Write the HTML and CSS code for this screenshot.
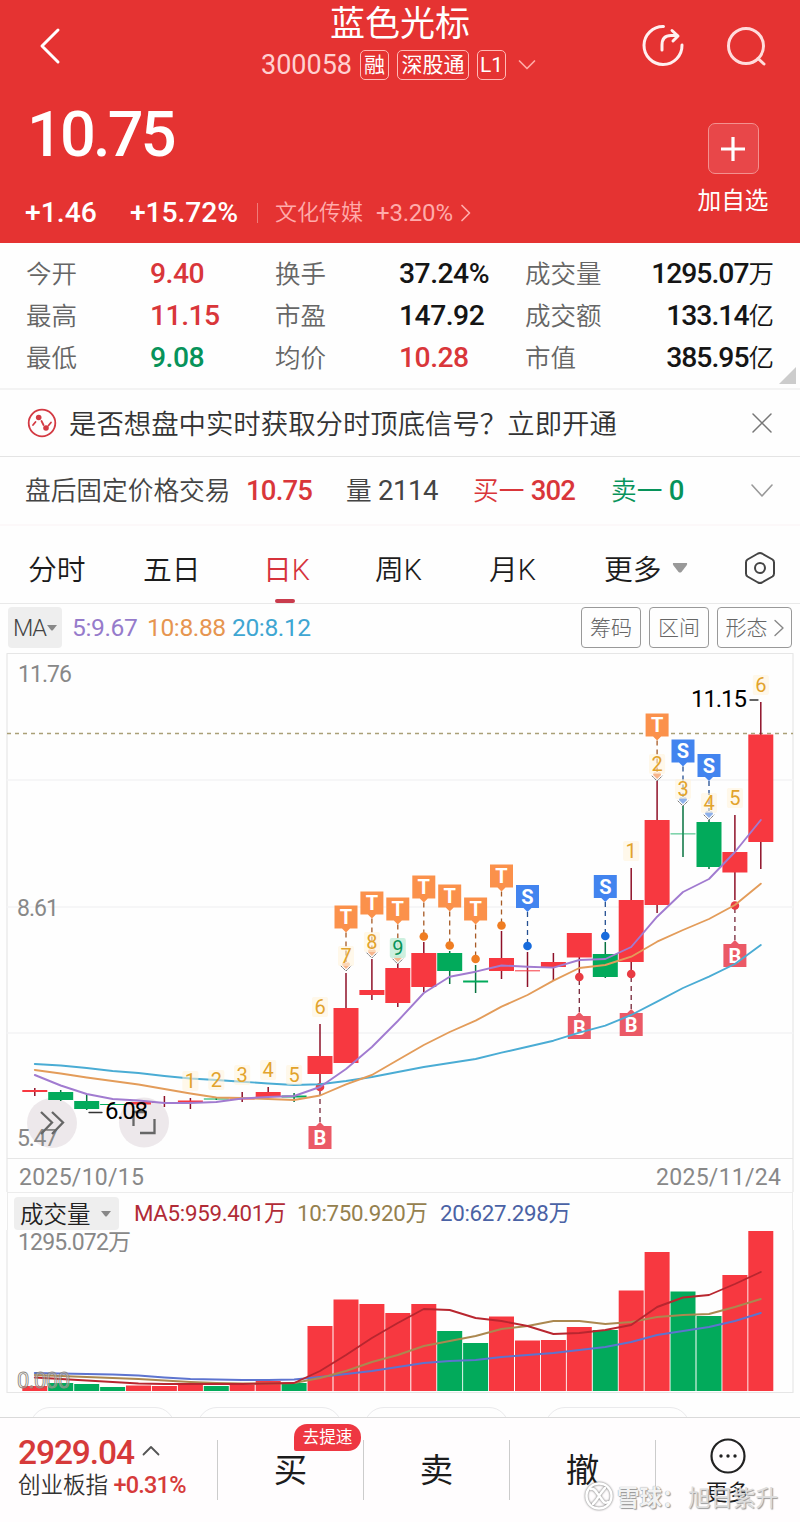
FILE: index.html
```html
<!DOCTYPE html>
<html lang="zh-CN">
<head>
    <meta charset="UTF-8">
    <meta name="viewport" content="width=device-width, initial-scale=1.0">
    <title>蓝色光标 300058</title>
    <link rel="stylesheet" href="styles.css">
</head>
<body>
    <div class="app">
        <!-- Header -->
        <header class="header">
            <div class="nav">
                <svg class="back" width="30" height="44" viewBox="0 0 30 44"><path d="M23 8 L7 24 L23 40"/></svg>
                <div class="stock">
                    <h1>蓝色光标</h1>
                    <div class="stock-code">
                        <span class="code">300058</span>
                        <span class="tag">融</span>
                        <span class="tag tag-wide">深股通</span>
                        <span class="tag">L1</span>
                        <svg class="code-arrow" width="18" height="12" viewBox="0 0 18 12"><path d="M1.5 2 L9 9.5 L16.5 2"/></svg>
                    </div>
                </div>
                <div class="nav-icons">
                    <svg width="44" height="44" viewBox="0 0 44 44">
                        <path d="M22.5 2.5 A19 19 0 1 0 41 21"/>
                        <path d="M21 26 V21 Q21 11.500 30 11.500 H36 M31 6.500 L37 12 L32 17"/>
                    </svg>
                    <svg class="search" width="42" height="42" viewBox="0 0 42 42"><circle cx="20" cy="20" r="17.500"/><path d="M32 32.500 L38 38"/></svg>
                </div>
            </div>
            <div class="quote">
                <div class="quote-left">
                    <div class="price">10.75</div>
                    <div class="change">
                        <span class="diff">+1.46</span>
                        <span class="percent">+15.72%</span>
                        <span class="sector">文化传媒</span>
                        <span class="sector-percent">+3.20%</span>
                        <svg width="12" height="18" viewBox="0 0 12 18"><path d="M2 1.500 L9.500 9 L2 16.500"/></svg>
                    </div>
                </div>
                <div class="add">
                    <div class="add-button"><svg width="26" height="26" viewBox="0 0 26 26"><path d="M13 1 V25 M1 13 H25"/></svg></div>
                    <span>加自选</span>
                </div>
            </div>
        </header>

        <!-- Stats -->
        <section class="stats">
            <span>今开</span><b class="red">9.40</b><span>换手</span><b>37.24%</b><span>成交量</span><b class="last">1295.07<i>万</i></b>
            <span>最高</span><b class="red">11.15</b><span>市盈</span><b>147.92</b><span>成交额</span><b class="last">133.14<i>亿</i></b>
            <span>最低</span><b class="green">9.08</b><span>均价</span><b class="red">10.28</b><span>市值</span><b class="last">385.95<i>亿</i></b>
            <div class="corner"></div>
        </section>

        <!-- Notice -->
        <section class="notice">
            <svg width="30" height="30" viewBox="0 0 30 30">
                <circle class="ring" cx="15" cy="15" r="13.300"/>
                <path d="M6 17 L8.500 14 M14.500 13 L16.500 17 M21.500 17.500 L24 14.500"/>
                <circle cx="11.700" cy="9.500" r="2.800"/><circle cx="19" cy="20" r="2.800"/>
            </svg>
            <p>是否想盘中实时获取分时顶底信号？立即开通</p>
            <svg class="close" width="20" height="20" viewBox="0 0 20 20"><path d="M1 1 L19 19 M19 1 L1 19"/></svg>
        </section>

        <!-- After-hours trading -->
        <section class="after">
            <span class="after-name">盘后固定价格交易</span>
            <b class="red after-price">10.75</b>
            <span class="after-volume">量 <b>2114</b></span>
            <span class="after-buy red">买一 <b>302</b></span>
            <span class="after-sell green">卖一 <b>0</b></span>
            <svg width="24" height="14" viewBox="0 0 24 14"><path d="M2 1 L12 12 L22 1"/></svg>
        </section>

        <!-- Period tabs -->
        <nav class="tabs">
            <span>分时</span>
            <span>五日</span>
            <span class="active">日K</span>
            <span>周K</span>
            <span>月K</span>
            <span>更多</span>
            <svg class="tri" width="16" height="10" viewBox="0 0 16 10"><path d="M1 0 H15 Q15.500 1 14.500 2.500 L9.500 9 Q8 10 6.500 9 L1.500 2.500 Q.5 1 1 0Z"/></svg>
            <svg class="hex" width="32" height="34" viewBox="0 0 32 34"><path d="M14 2.500 Q16 1.500 18 2.500 L28.500 8.500 Q30 9.500 30 11.500 V22.500 Q30 24.500 28.500 25.500 L18 31.500 Q16 32.500 14 31.500 L3.500 25.500 Q2 24.500 2 22.500 V11.500 Q2 9.500 3.500 8.500Z"/><circle cx="16" cy="17" r="5"/></svg>
        </nav>

        <!-- Indicators -->
        <div class="indicators">
            <div class="select">MA<svg width="10" height="6" viewBox="0 0 10 6"><path d="M0 0 H10 L6 5 Q5 6 4 5Z"/></svg></div>
            <span class="ma5">5:9.67</span>
            <span class="ma10">10:8.88</span>
            <span class="ma20">20:8.12</span>
            <div class="tools">
                <button>筹码</button>
                <button>区间</button>
                <button class="shape">形态<svg width="10" height="18" viewBox="0 0 10 18"><path d="M1 1.500 L9 9 L1 16.500"/></svg></button>
            </div>
        </div>

        <svg class="kline" id="kline" width="800" height="540" viewBox="0 652 800 540"></svg>

        <!-- Volume -->
        <div class="volume">
            <div class="volume-head">
                <div class="select volume-select">成交量<svg width="10" height="6" viewBox="0 0 10 6"><path d="M0 0 H10 L6 5 Q5 6 4 5Z"/></svg></div>
                <span class="v5">MA5:959.401万</span>
                <span class="v10">10:750.920万</span>
                <span class="v20">20:627.298万</span>
            </div>
            <svg class="bars" id="bars" width="800" height="163" viewBox="0 1230 800 163"></svg>
        </div>

        <div class="pills"><i></i><i></i><i></i><i></i></div>

        <!-- Bottom bar -->
        <footer class="bottom">
            <div class="index">
                <div class="index-value"><span>2929.04</span><svg width="18" height="11" viewBox="0 0 18 11"><path d="M1.500 9.500 L9 2 L16.500 9.500"/></svg></div>
                <div class="index-name">创业板指 <b>+0.31%</b></div>
            </div>
            <div class="action">买<em>去提速</em></div>
            <div class="action">卖</div>
            <div class="action">撤</div>
            <div class="more">
                <svg width="38" height="38" viewBox="0 0 38 38"><circle class="ring" cx="19" cy="19" r="16.500"/><circle cx="12" cy="19" r="1.700"/><circle cx="19" cy="19" r="1.700"/><circle cx="26" cy="19" r="1.700"/></svg>
                <span>更多</span>
            </div>
            <div class="watermark">
                <svg width="30" height="30" viewBox="0 0 30 30"><circle cx="15" cy="15" r="12.500"/><path d="M7 8 Q10 7 13 12 L19 20 Q21 23 24 21 M21 7 Q16 13 15 15 Q13 19 9 23"/></svg>
                <span>雪球：</span><span class="author">旭日紫升</span>
            </div>
        </footer>
    </div>
    <script src="chart.js"></script>
</body>
</html>
```
FILE: styles.css
```css
body, html {
    margin: 0;
    padding: 0;
    background-color: #fefefe;
    font-family: Roboto, "Noto Sans CJK SC", sans-serif;
    color: #1c1c1c;
}

.app {
    width: 800px;
    height: 1522px;
    overflow: hidden;
    display: flex;
    flex-direction: column;
    font-weight: 350;
}

.app > * {
    flex-shrink: 0;
    box-sizing: border-box;
}

svg {
    display: block;
    fill: none;
    stroke-linecap: round;
    stroke-linejoin: round;
}

b {
    font-weight: 500;
}

.red {
    color: #d9363a;
}

.green {
    color: #07935a;
}

/* Header */
.header {
    height: 243px;
    background-color: #e53332;
    color: #fff;
}

.nav {
    height: 90px;
    display: grid;
    grid-template-columns: 200px 400px 200px;
}

.back {
    margin: 22px 0 0 35px;
    stroke: #fff;
    stroke-width: 3;
}

.stock h1 {
    margin: 0;
    height: 49px;
    line-height: 50px;
    font-size: 35px;
    font-weight: 400;
    text-align: center;
}

.stock-code {
    display: flex;
    align-items: center;
    height: 32px;
    padding-left: 61px;
}

.code {
    width: 99px;
    font-size: 27px;
    font-weight: 400;
    color: #ffd0d0;
}

.tag {
    box-sizing: border-box;
    width: 29px;
    height: 30px;
    line-height: 28px;
    margin-right: 8px;
    border: 1px solid #ffb9b5;
    border-radius: 5px;
    font-size: 21px;
    font-weight: 400;
    text-align: center;
    white-space: nowrap;
}

.tag-wide {
    width: 72px;
}

.code-arrow {
    margin-left: 4px;
    stroke: #ffaaa6;
    stroke-width: 1.7;
}

.nav-icons {
    display: flex;
    padding: 24px 0 0 41px;
    gap: 41px;
}

.nav-icons svg {
    stroke: #fff0f0;
    stroke-width: 3;
}

.nav-icons .search {
    margin-top: 2px;
    stroke: #ffdcdc;
}

.quote {
    display: flex;
    justify-content: space-between;
}

.price {
    height: 88px;
    line-height: 90px;
    padding-left: 27px;
    font-size: 63px;
    font-weight: 500;
    letter-spacing: -2.8px;
}

.change {
    display: flex;
    align-items: center;
    height: 69px;
    padding-left: 25px;
    font-size: 28.3px;
    font-weight: 500;
}

.diff {
    width: 105px;
}

.percent {
    width: 127px;
    letter-spacing: -0.1px;
}

.sector {
    width: 83px;
    padding-left: 17px;
    border-left: 1px solid #f07b78;
    line-height: 20px;
    font-size: 22px;
    font-weight: 350;
    color: #ffabab;
    white-space: nowrap;
}

.sector-percent {
    width: 84px;
    padding-left: 18px;
    font-size: 24px;
    font-weight: 400;
    letter-spacing: -0.2px;
    color: #ffabab;
}

.change svg {
    stroke: #ffabab;
    stroke-width: 1.7;
}

.add {
    width: 134px;
    padding-top: 33px;
    display: flex;
    flex-direction: column;
    align-items: center;
}

.add-button {
    display: flex;
    align-items: center;
    justify-content: center;
    width: 49px;
    height: 49px;
    border: 1px solid #f3918f;
    border-radius: 7px;
    background-color: #e84749;
}

.add-button svg {
    stroke: #fff;
    stroke-width: 3.2;
    stroke-linecap: butt;
}

.add span {
    margin-top: 9px;
    line-height: 36px;
    font-size: 23.7px;
    font-weight: 400;
}

/* Stats */
.stats {
    position: relative;
    height: 147px;
    padding: 10px 27px 0 26px;
    display: grid;
    grid-template-columns: 124px 125px 124px 126px 100px 148px;
    grid-auto-rows: 42px;
    line-height: 42px;
    border-bottom: 2px solid #f3f3f3;
    font-size: 25.5px;
    color: #666;
}

.stats b {
    line-height: 41px;
    font-size: 28.3px;
    letter-spacing: -0.5px;
}

.stats b:not(.red):not(.green) {
    color: #151515;
}

.stats .last {
    letter-spacing: -1px;
    text-align: right;
    white-space: nowrap;
}

.stats i {
    font-style: normal;
    font-weight: 350;
    font-size: 25.5px;
}

.corner {
    position: absolute;
    right: 4px;
    bottom: 4px;
    border-left: 17px solid transparent;
    border-bottom: 17px solid #ccc;
}

/* Notice */
.notice {
    display: flex;
    align-items: center;
    height: 67px;
    padding: 0 28px 0 27px;
    border-bottom: 1px solid #e4e4e4;
}

.notice p {
    flex: 1;
    margin: -3px 0 0 12px;
    font-size: 27.4px;
    color: #333;
    white-space: nowrap;
}

.notice svg {
    fill: #d33a43;
    stroke: #d33a43;
    stroke-width: 1.8;
}

.notice .ring, .notice .close {
    fill: none;
}

.notice circle:not(.ring) {
    stroke: none;
}

.notice .close {
    stroke: #777;
    stroke-width: 1.5;
}

/* After-hours */
.after {
    display: flex;
    align-items: center;
    height: 69px;
    padding-left: 25px;
    border-bottom: 2px solid #fcf8f9;
    line-height: 60px;
    font-size: 25.7px;
    color: #444;
    white-space: nowrap;
}

.after b {
    font-size: 27.5px;
    letter-spacing: -0.8px;
}

.after-name {
    width: 221px;
}

.after-price {
    width: 100px;
}

.after-volume {
    width: 127px;
}

.after-volume b {
    font-weight: 400;
    letter-spacing: -0.4px;
}

.after-buy {
    width: 138px;
}

.after-sell {
    width: 139px;
}

.after svg {
    stroke: #999;
    stroke-width: 1.6;
}

/* Tabs */
.tabs {
    display: flex;
    align-items: center;
    height: 78px;
    padding: 6px 0 0 28px;
    border-bottom: 1px solid #e9e9e9;
    font-size: 28.8px;
    font-weight: 350;
    white-space: nowrap;
}

.tabs span {
    box-sizing: border-box;
    width: 115px;
    height: 71px;
    line-height: 76px;
}

.tabs span:nth-child(2) {
    width: 120px;
}

.tabs .active {
    width: 112px;
    color: #d6333c;
}

.tabs span:nth-child(4) {
    width: 114px;
}

.tabs .active::after {
    content: "";
    display: block;
    width: 20px;
    height: 4px;
    margin: -9px 0 0 12px;
    border-radius: 2px;
    background-color: #c93c4d;
}

.tabs span:nth-child(6) {
    width: 68px;
}

.tri {
    fill: #999;
}

.hex {
    margin-left: 56px;
    stroke: #444;
    stroke-width: 2;
}

/* Indicators */
.indicators {
    display: flex;
    align-items: center;
    height: 48px;
    padding: 0 8px 1px;
    font-size: 24.6px;
    font-weight: 400;
    letter-spacing: -0.4px;
}

.select {
    box-sizing: border-box;
    display: flex;
    align-items: center;
    justify-content: space-between;
    width: 54px;
    height: 41px;
    padding: 0 5px;
    border-radius: 4px;
    background-color: #eee;
    color: #444;
    font-size: 23.5px;
    font-weight: 350;
    letter-spacing: -1.2px;
}

.select svg {
    fill: #888;
}

.ma5 {
    width: 75px;
    margin-left: 10px;
    color: #967bcb;
}

.ma10 {
    width: 85px;
    color: #e69550;
}

.ma20 {
    color: #3fa6d2;
}

.tools {
    display: flex;
    gap: 8px;
    margin-left: auto;
}

.tools button {
    box-sizing: border-box;
    width: 60px;
    height: 41px;
    padding: 0;
    border: 1px solid #999;
    border-radius: 4px;
    background-color: #fefefe;
    font-family: inherit;
    font-size: 21px;
    font-weight: 300;
    line-height: 38px;
    color: #666;
}

.tools .shape {
    display: flex;
    align-items: center;
    justify-content: center;
    gap: 6px;
    width: 75px;
}

.shape svg {
    stroke: #888;
    stroke-width: 1.4;
}

/* Charts */
.frame {
    stroke: #e6e6e6;
    stroke-width: 1.2;
}

.grid {
    stroke: #f3f3f5;
    stroke-width: 1.5;
}

.up {
    fill: #f73840;
}

.down {
    fill: #02aa5b;
}

.wick-up {
    stroke: #8e1028;
    stroke-width: 1.5;
    stroke-linecap: butt;
}

.wick-down {
    stroke: #06723f;
    stroke-width: 1.5;
    stroke-linecap: butt;
}

.line {
    stroke-width: 1.9;
}

.axis {
    fill: #888;
    font-size: 23px;
    font-weight: 400;
}

.peak {
    fill: #000;
    font-size: 24px;
    font-weight: 400;
}

.count {
    fill: #e2a32c;
    font-size: 20px;
    font-weight: 400;
    text-anchor: middle;
}

.count-nine {
    fill: #07935a;
}

.badge-text {
    fill: #fff;
    font-size: 20px;
    font-weight: 700;
    text-anchor: middle;
}

.round {
    fill: #e9e3e6;
    fill-opacity: 0.82;
}

.round-icon {
    stroke: #666;
    stroke-width: 2.3;
    stroke-linecap: butt;
    stroke-linejoin: miter;
}

.zero {
    fill: #fff;
    fill-opacity: 0.3;
    stroke: #8d8880;
    stroke-width: 0.9;
    font-size: 22px;
    font-weight: 400;
}

/* Volume */
.volume-head {
    box-sizing: border-box;
    display: flex;
    align-items: center;
    height: 38px;
    margin: 0 7px;
    padding: 3px 0 0 6px;
    border: solid #ececec;
    border-width: 1px 1px 0;
    line-height: 32px;
    font-size: 22.3px;
    font-weight: 400;
    letter-spacing: -0.3px;
    white-space: nowrap;
}

.volume-select {
    width: 105px;
    height: 33px;
    padding: 3px 8px 0 6px;
    color: #222;
    font-size: 23.5px;
    letter-spacing: 0;
}

.volume-select svg {
    margin-top: -2px;
}

.v5 {
    width: 163px;
    margin-left: 15px;
    color: #b12b36;
}

.v10 {
    width: 143px;
    color: #94804e;
}

.v20 {
    color: #4a62a5;
}

/* Clipped row above the bottom bar */
.pills {
    display: flex;
    gap: 22px;
    height: 24px;
    padding: 14px 0 0 30px;
    overflow: hidden;
}

.pills i {
    box-sizing: border-box;
    width: 145px;
    height: 40px;
    border: 1px solid #eaeaec;
    border-radius: 20px;
}

.pills i:last-child {
    margin-left: 14px;
}

/* Bottom bar */
.bottom {
    position: relative;
    display: flex;
    height: 105px;
    border-top: 1px solid #dadada;
    background-color: #fffdfe;
}

.index {
    width: 217px;
    padding: 14px 0 0 18px;
    box-sizing: border-box;
}

.index-value {
    display: flex;
    align-items: center;
    height: 41px;
    font-size: 33.5px;
    font-weight: 500;
    letter-spacing: -1.1px;
    color: #d63a3a;
}

.index-value span {
    width: 124px;
}

.index-value svg {
    margin-top: -4px;
    stroke: #555;
    stroke-width: 1.8;
}

.index-name {
    line-height: 24px;
    font-size: 22.5px;
    color: #333;
    white-space: nowrap;
}

.index-name b {
    color: #d63a3a;
    font-size: 23.5px;
    letter-spacing: -0.8px;
}

.action {
    position: relative;
    box-sizing: border-box;
    width: 146px;
    height: 60px;
    margin-top: 22px;
    border-left: 1px solid #ccc;
    line-height: 62px;
    font-size: 33.5px;
    font-weight: 400;
    text-align: center;
}

.action em {
    position: absolute;
    left: 76px;
    top: -16px;
    width: 67px;
    height: 27px;
    line-height: 27px;
    border-radius: 13px 13px 13px 2px;
    background-color: #ee3742;
    color: #fff;
    font-size: 16.7px;
    font-style: normal;
}

.more {
    box-sizing: border-box;
    width: 144px;
    height: 60px;
    margin-top: 22px;
    border-left: 1px solid #ccc;
    display: flex;
    flex-direction: column;
    align-items: center;
    font-size: 21.5px;
    font-weight: 400;
}

.more svg {
    flex-shrink: 0;
    margin-top: -3px;
    fill: #222;
}

.more .ring {
    fill: none;
    stroke: #222;
    stroke-width: 2.2;
}

.more span {
    line-height: 35px;
}

.watermark {
    position: absolute;
    left: 584px;
    top: 62px;
    display: flex;
    align-items: center;
    height: 32px;
    font-size: 22.5px;
    font-weight: 400;
    color: #f2f2f2;
    text-shadow: 1px 1px 1px #999;
    white-space: nowrap;
}

.watermark svg {
    margin-right: 3px;
    stroke: #fff;
    stroke-width: 2.5;
    filter: drop-shadow(0 0 1px #666);
}

.watermark span:nth-child(2) {
    width: 71px;
    font-weight: 700;
    text-shadow: 0 0 1px #888, 1px 1px 1px #999;
}

.watermark .author {
    color: #ddd;
}
```
FILE: chart.js
```js
const COUNT = 29;
const RED = 'up', GREEN = 'down';

// center of a day's column
function cx(i) {
    return +(34.8 + i * 25.93).toFixed(1);
}

// color, body top, body bottom, high, low
const candles = [
    [RED, 1090, 1092, 1088, 1096],
    [GREEN, 1092, 1100, 1090, 1101],
    [GREEN, 1101, 1109, 1094, 1110],
    [GREEN, 1104, 1105, 1104, 1105],
    [RED, 1102, 1104.5, 1102, 1105],
    [RED, 1102, 1103, 1096, 1107],
    [RED, 1100.5, 1102, 1098, 1109],
    [GREEN, 1098.5, 1099.5, 1098, 1100],
    [RED, 1098.5, 1099.5, 1092, 1102],
    [RED, 1092, 1097, 1087, 1100],
    [GREEN, 1095.5, 1097.5, 1093, 1102],
    [RED, 1056, 1074, 1024, 1088],
    [RED, 1008, 1063, 973, 1063],
    [RED, 990, 995, 959, 1000],
    [RED, 968, 1003, 964, 1007],
    [RED, 953, 987, 942, 992],
    [GREEN, 953, 971, 951, 984],
    [GREEN, 980.5, 982.5, 965, 993],
    [RED, 958, 971, 931, 979],
    [RED, 970.3, 971.3, 952, 987],
    [RED, 962, 967, 953, 981],
    [RED, 933, 957.5, 957, 974],
    [GREEN, 954, 977, 942, 978],
    [RED, 900, 962, 868, 970],
    [RED, 820, 905, 781, 913],
    [GREEN, 833.5, 834.3, 806, 857],
    [GREEN, 822, 867, 820, 869],
    [RED, 852, 872.5, 815, 900],
    [RED, 734.5, 842, 702, 869]
];

const ma5 = [1075, 1085.5, 1094, 1099, 1100.5, 1103, 1103, 1102, 1098.5, 1097, 1096, 1087, 1069, 1047, 1021, 993, 976.7, 971.7, 965.5, 966.7, 967.6, 960, 959, 947, 916.7, 892, 879, 852, 820];
const ma10 = [1070, 1073.5, 1077.5, 1081, 1084.5, 1089, 1093.5, 1097.5, 1098, 1099, 1100, 1095.5, 1084.3, 1075, 1060, 1045, 1032, 1020.7, 1006.7, 995, 980.7, 968, 965, 956.7, 941.7, 930, 919, 905, 883.7];
const ma20 = [1064, 1065.5, 1068, 1071, 1073, 1076, 1078.5, 1080, 1081.7, 1083.5, 1085, 1084.3, 1081, 1077, 1072, 1067, 1063, 1059, 1052.7, 1046.7, 1040.7, 1032.7, 1025.7, 1015, 1001.7, 988, 976.7, 964, 945];

const volumes = [1386, 1383, 1384, 1387, 1385.5, 1386, 1385, 1386, 1385, 1381, 1383, 1326, 1299.5, 1304, 1313, 1304, 1331, 1343, 1316.5, 1340.5, 1340, 1327, 1330, 1290.5, 1252, 1291.5, 1316, 1275, 1231];
const v5 = [1377.5, 1379, 1380.5, 1382, 1383.5, 1384, 1384, 1384, 1384, 1383.5, 1383, 1371, 1355, 1338, 1323, 1309, 1310, 1318, 1321, 1326, 1334, 1333, 1330, 1325, 1307, 1297.5, 1295, 1284, 1272];
const v10 = [1375, 1376, 1377, 1378, 1379, 1380.5, 1382, 1383, 1383.5, 1383.5, 1383, 1378, 1371, 1362, 1355, 1346, 1341, 1336, 1329, 1326, 1321, 1321, 1324, 1322, 1317, 1315, 1314, 1307, 1299];
const v20 = [1373, 1373.5, 1374, 1374.5, 1375.5, 1377.5, 1379, 1379.5, 1380, 1380, 1379.5, 1377, 1374, 1371, 1367, 1363, 1361, 1360, 1357, 1355, 1353, 1350, 1347, 1342, 1335, 1331, 1327, 1321, 1313];

// letter, day, top of the box, end of the dashed line
const badges = [
    ['T', 12, 905.5, 962], ['T', 13, 891.5, 949], ['T', 14, 897.5, 955], ['T', 15, 875.5, 936.5],
    ['T', 16, 884.5, 945.5], ['T', 17, 897.5, 959], ['T', 18, 864.5, 925.5], ['S', 19, 885, 946],
    ['S', 22, 875, 936], ['T', 24, 713.5, 772], ['S', 25, 739.5, 797], ['S', 26, 754, 811],
    ['B', 11, 1126, 1087], ['B', 21, 1016, 977], ['B', 23, 1013, 974], ['B', 27, 944, 905.5]
];
const badgeColors = { T: '#fb914b', S: '#4284ef', B: '#eb5966' };
const dotColors = { T: '#ef7d22', S: '#176bdc', B: '#e93b43' };
const hearts = [12, 13, 14, 24, 25, 26];

// label, day, center y
const counts = [
    [1, 6, 1081], [2, 7, 1080], [3, 8, 1075], [4, 9, 1070], [5, 10, 1075], [6, 11, 1007],
    [7, 12, 956], [8, 13, 942], [9, 14, 948], [1, 23, 851], [2, 24, 764], [3, 25, 789],
    [4, 26, 803], [5, 27, 798], [6, 28, 685]
];

function line(values, color) {
    const points = values.map((y, i) => cx(i) + ',' + y).join(' ');
    return `<polyline class="line" points="${points}" stroke="${color}"/>`;
}

function rect(i, cls, top, bottom) {
    return `<rect class="${cls}" x="${cx(i) - 12.5}" y="${top}" width="25" height="${bottom - top}"/>`;
}

function text(cls, x, y, width, str) {
    return `<text class="${cls}" x="${x}" y="${y}" textLength="${width}">${str}</text>`;
}

function drawKline() {
    let s = '<path class="frame" d="M7 1192 V653.500 H793 V1192 M7 1158.500 H793"/>';
    s += '<path class="grid" d="M7 780 H793 M7 907 H793 M7 1033 H793"/>';
    s += '<path d="M7 733.500 H793" stroke="#aaa077" stroke-width="1.300" stroke-dasharray="4 4" stroke-linecap="butt"/>';
    s += text('axis', 18, 682, 54, '11.76') + text('axis', 17, 916, 42, '8.61');
    s += text('axis', 19, 1185, 125, '2025/10/15') + text('axis', 656, 1185, 125, '2025/11/24');

    // floating round buttons
    s += '<circle class="round" cx="52" cy="1123" r="25"/><circle class="round" cx="144" cy="1122.500" r="25"/>';
    s += text('axis', 17, 1146, 41, '5.47');
    s += '<path class="round-icon" d="M41 1112 L52 1122.500 L41 1134 M52 1112 L63 1122.500 L52 1134 M133.500 1126 V1112 H147 M140 1133 H154.500 V1119"/>';

    candles.forEach(([cls, top, bottom, high, low], i) => {
        s += `<path class="wick-${cls}" d="M${cx(i)} ${high} V${low}"/>` + rect(i, cls, top, bottom);
    });

    badges.forEach(([letter, i, top, end]) => {
        const x = cx(i), c = badgeColors[letter];
        const start = letter === 'B' ? top - 4 : top + 27;
        const dash = letter === 'S' ? '#244f91' : letter === 'T' ? '#a65a25' : '#762638';
        s += `<path d="M${x} ${start} V${end}" stroke="${dash}" stroke-width="1.300" stroke-dasharray="5 4" stroke-linecap="butt"/>`;
        if (letter === 'B') {
            s += `<path fill="${c}" d="M${x - 11.5} ${top} h7.500 l4 -4 l4 4 h7.500 v23 h-23Z"/>`;
        } else {
            s += `<path fill="${c}" d="M${x - 11.5} ${top} h23 v23 h-7.500 l-4 4 l-4 -4 h-7.500Z"/>`;
        }
        s += `<text class="badge-text" x="${x}" y="${top + 18.5}">${letter}</text>`;
        if (hearts.includes(i)) {
            const h = letter === 'T' ? '#f6b58c' : '#8fb1ea';
            s += `<path fill="${h}" d="M${x} ${end + 7} l-4 -4 q0 -4 4 -2 q4 -2 4 2Z"/>`;
            s += `<path stroke="#555" stroke-width=".8" stroke-dasharray="2 1.500" d="M${x - 5} ${end + 4} l5 5 l5 -5"/>`;
        } else {
            s += `<circle cx="${x}" cy="${end}" r="4.300" fill="${dotColors[letter]}"/>`;
        }
    });

    s += line(ma20, '#4aacd4') + line(ma10, '#e39c5a') + line(ma5, '#a17bd0');

    counts.forEach(([n, i, y]) => {
        const nine = n === 9;
        s += `<rect x="${cx(i) - 8}" y="${y - 10}" width="16" height="20" rx="2" fill="${nine ? '#c8eedb' : '#fff3d9'}" fill-opacity="${nine ? 0.9 : 0.55}"/>`;
        s += `<text class="count${nine ? ' count-nine' : ''}" x="${cx(i)}" y="${y + 7}">${n}</text>`;
    });

    s += text('peak', 691, 707, 56, '11.15') + text('peak', 105, 1119, 43, '6.08');
    s += '<path d="M750 700 H758 M89 1112.500 H102" stroke="#333" stroke-width="1.300"/>';
    document.getElementById('kline').innerHTML = s;
}

function drawVolume() {
    let s = '<path class="frame" d="M7 1230 V1392.500 H793 V1230"/>';
    s += text('axis', 18, 1250, 113, '1295.072万');
    for (let i = 0; i < COUNT; i++) {
        s += rect(i, candles[i][0], volumes[i], 1391);
    }
    s += line(v20, '#5d74cf') + line(v10, '#ab8850') + line(v5, '#b8262f');
    s += text('zero', 17, 1388, 53, '0.000');
    document.getElementById('bars').innerHTML = s;
}

drawKline();
drawVolume();
```
